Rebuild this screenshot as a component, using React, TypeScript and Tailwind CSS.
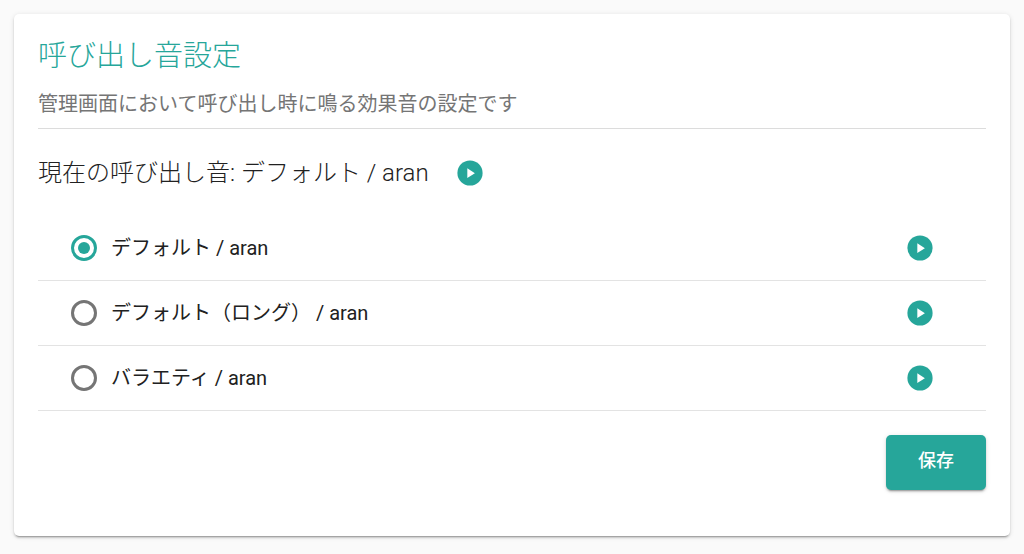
import { useState } from "react";

const sounds = [
  { id: "default", name: "デフォルト / aran" },
  { id: "default-long", name: "デフォルト（ロング） / aran" },
  { id: "variety", name: "バラエティ / aran" },
];

function PlayButton({ label }: { label: string }) {
  return (
    <button type="button" aria-label={label} className="shrink-0 text-[#26a69a]">
      <svg viewBox="0 0 26 26" className="block size-[26px]" aria-hidden="true">
        <circle cx="13" cy="13" r="12.6" fill="currentColor" />
        <path d="M10.3 8.2v9.9l7.6-4.95z" fill="#fff" />
      </svg>
    </button>
  );
}

export default function App() {
  const [selected, setSelected] = useState("default");

  return (
    <main className="min-h-screen bg-[#fafafa] px-3.5 pt-3.5 pb-[18px] font-[Roboto,'Noto_Sans_CJK_JP',sans-serif] text-[#212121]">
      <section className="rounded-[5px] bg-white px-6 pt-6 pb-[46px] shadow-[0_2px_2px_rgba(0,0,0,0.14),0_3px_1px_-2px_rgba(0,0,0,0.2),0_1px_5px_rgba(0,0,0,0.12)]">
        <header className="border-b border-[#dcdcdc] pb-2">
          <h1 className="text-[29px] leading-9 font-light text-[#26a69a]">呼び出し音設定</h1>
          <p className="mt-3.5 text-[20px] leading-8 text-[#757575]">
            管理画面において呼び出し時に鳴る効果音の設定です
          </p>
        </header>

        <div className="mt-6 flex items-center gap-7">
          <h2 className="text-[24px] leading-10 font-light">現在の呼び出し音: デフォルト / aran</h2>
          <PlayButton label="現在の呼び出し音を再生" />
        </div>

        <ul className="mt-[23px]">
          {sounds.map((sound) => (
            <li
              key={sound.id}
              className="flex h-[65px] items-center justify-between border-b border-[#e3e3e3] pr-[53px] pl-[33px]"
            >
              <label className="flex items-center gap-3.5 text-[20px] leading-8">
                <input
                  type="radio"
                  name="sound"
                  value={sound.id}
                  checked={selected === sound.id}
                  onChange={() => setSelected(sound.id)}
                  className="grid size-[26px] shrink-0 appearance-none place-items-center rounded-full border-3 border-[#757575] before:size-3 before:rounded-full checked:border-[#26a69a] checked:before:bg-[#26a69a]"
                />
                {sound.name}
              </label>
              <PlayButton label={`${sound.name}を再生`} />
            </li>
          ))}
        </ul>

        <div className="mt-6 flex justify-end">
          <button
            type="button"
            className="h-[55px] rounded-[5px] bg-[#26a69a] px-8 pb-1 text-[18px] font-medium text-white shadow-[0_2px_2px_rgba(0,0,0,0.14),0_3px_1px_-2px_rgba(0,0,0,0.2),0_1px_5px_rgba(0,0,0,0.12)]"
          >
            保存
          </button>
        </div>
      </section>
    </main>
  );
}
